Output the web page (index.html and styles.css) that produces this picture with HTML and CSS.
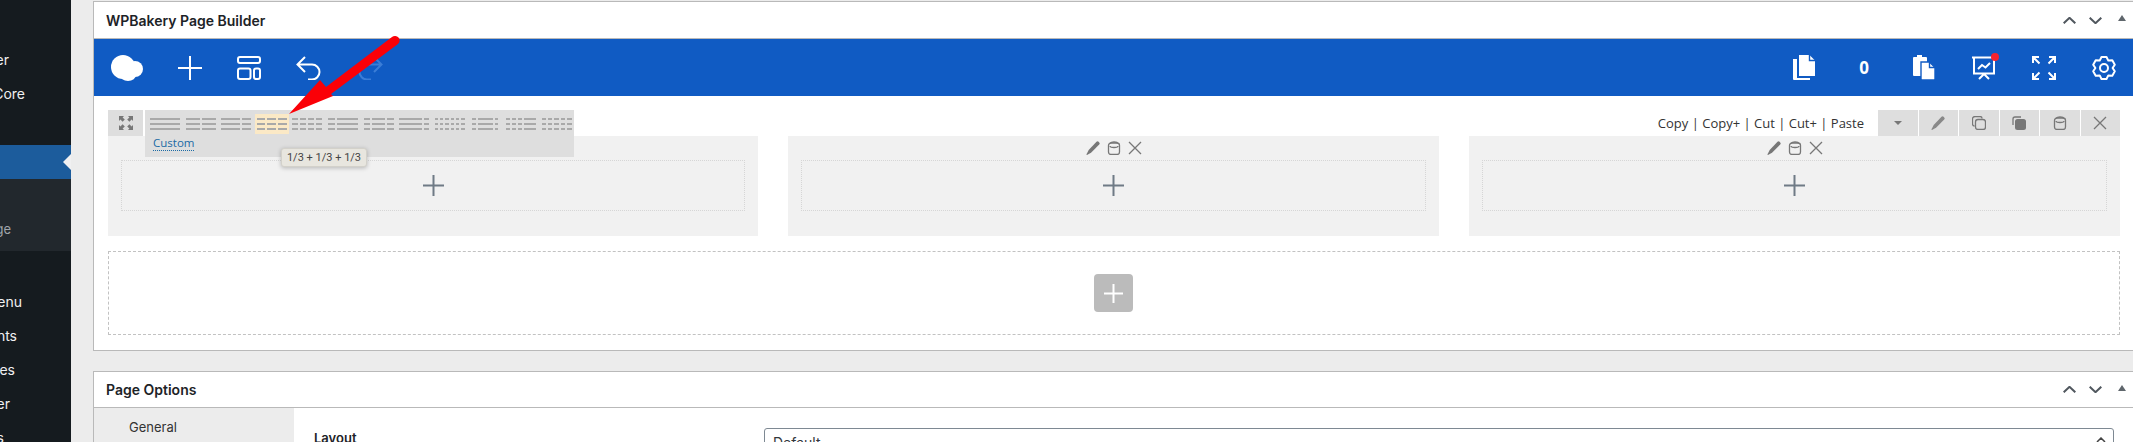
FILE: index.html
```html
<!DOCTYPE html>
<html lang="en">
<head>
<meta charset="utf-8">
<title>WPBakery Page Builder</title>
<link rel="stylesheet" href="styles.css">
</head>
<body>
<aside class="sidebar">
  <div class="side-item side-first">er</div>
  <div class="side-item side-core">Core</div>
  <div class="side-item side-active"></div>
  <div class="side-sub"><span class="side-sub-text">ge</span></div>
  <div class="side-item side-gap"></div>
  <div class="side-item">enu</div>
  <div class="side-item">nts</div>
  <div class="side-item">es</div>
  <div class="side-item">er</div>
  <div class="side-item">s</div>
</aside>
<main class="main">
  <section class="panel">
    <header class="panel-head">
      <h2 class="panel-title">WPBakery Page Builder</h2>
      <div class="panel-tools">
        <svg class="chev" viewBox="0 0 13 7"><path d="M.7 6.300 6.500.8l5.800 5.500"/></svg>
        <svg class="chev" viewBox="0 0 13 7"><path d="M.7.700 6.500 6.200 12.300.7"/></svg>
        <svg class="tri" viewBox="0 0 8 6"><path d="M4 0 8 6H0Z"/></svg>
      </div>
    </header>
    <div class="bluebar">
      <div class="bar-left">
        <svg class="ic-cloud" viewBox="0 0 32 26"><circle cx="12" cy="12" r="12"/><circle cx="24" cy="14" r="8"/><ellipse cx="17" cy="20" rx="8" ry="6"/></svg>
        <svg class="ic-24" viewBox="0 0 24 24"><path class="st" d="M12 0v24M0 12h24"/></svg>
        <svg class="ic-24" viewBox="0 0 24 24"><g class="st"><rect x="1" y="1" width="22" height="6" rx="2"/><rect x="1" y="12.500" width="12.500" height="10.500" rx="2"/><rect x="17" y="12.500" width="6" height="10.500" rx="2"/></g></svg>
        <svg class="ic-undo" viewBox="0 0 25 24"><path class="st" d="M9 1 1.500 8.500 9 16M1.500 8.500H16a7.500 7.500 0 0 1 0 15h-4"/></svg>
        <svg class="ic-redo" viewBox="0 0 27 24"><path class="st-dim" d="M18 1l7.500 7.500L18 16M25.500 8.500H11a7.500 7.500 0 0 0 0 15h4"/></svg>
      </div>
      <div class="bar-right">
        <div class="bar-cell"><svg class="ic-doc" viewBox="0 0 22 25"><path d="M6 0h10.500L22 5.500V21H6ZM0 4h4v19h13v2H1a1 1 0 0 1-1-1Z"/><path class="fold" d="M16.500 0v5.500H22"/></svg></div>
        <div class="bar-cell bar-count">0</div>
        <div class="bar-cell"><svg class="ic-doc" viewBox="0 0 22 25"><path d="M1 2h3V0h5v2h4a1 1 0 0 1 1 1v18H1a1 1 0 0 1-1-1V3a1 1 0 0 1 1-1Z"/><path class="doc-front" d="M8 7h8.500L22 12.500V24a1 1 0 0 1-1 1H9a1 1 0 0 1-1-1Z"/><path class="fold" d="M16.500 7v5.500H22"/></svg></div>
        <div class="bar-cell bar-monitor">
          <svg class="ic-24" viewBox="0 0 24 24"><path class="st" d="M0 1.500h24M2 2v15.500h20V2M12 18l-5 5M12 18l5 5M6 13l4-4 3.500 2.500L18 7"/></svg>
          <span class="dot"></span>
        </div>
        <div class="bar-cell"><svg class="ic-24" viewBox="0 0 24 24"><path class="st" d="M1 7V1h6M1 1l6.500 6.500M23 7V1h-6M23 1l-6.500 6.500M1 17v6h6M1 23l6.500-6.500M23 17v6h-6M23 23l-6.500-6.500"/></svg></div>
        <div class="bar-cell"><svg class="ic-24" viewBox="0 0 24 24"><g class="st"><path class="rj" d="M9.500 1h5l1.800 3.600 4-.3 2.500 4.400-2.200 3.300 2.200 3.300-2.500 4.400-4-.3-1.800 3.600h-5l-1.800-3.600-4 .3-2.500-4.400L3.400 12 1.200 8.700l2.500-4.400 4 .3Z"/><circle cx="12" cy="12" r="4"/></g></svg></div>
      </div>
    </div>
    <div class="builder">
      <div class="row-head">
        <button class="expand" type="button">
          <svg class="ic-ctl" viewBox="0 0 14 14"><path class="ctl-fill" d="M0 0h5L3.600 1.400 5.800 3.600 3.600 5.800 1.400 3.600 0 5ZM14 0v5l-1.400-1.400-2.200 2.200-2.200-2.200 2.200-2.200L9 0ZM0 14V9l1.400 1.400 2.200-2.200 2.200 2.200-2.200 2.200L5 14ZM14 14H9l1.400-1.400-2.200-2.200 2.200-2.200 2.200 2.200L14 9Z"/></svg>
        </button>
        <div class="layouts">
          <div class="lay-row">
            <div class="lay"><div class="lay-bars"><i class="g1"></i></div></div>
            <div class="lay"><div class="lay-bars"><i class="g1"></i><i class="g1"></i></div></div>
            <div class="lay"><div class="lay-bars"><i class="g2"></i><i class="g1"></i></div></div>
            <div class="lay lay-on"><div class="lay-bars"><i class="g1"></i><i class="g1"></i><i class="g1"></i></div></div>
            <div class="lay"><div class="lay-bars"><i class="g1"></i><i class="g1"></i><i class="g1"></i><i class="g1"></i></div></div>
            <div class="lay"><div class="lay-bars"><i class="g1"></i><i class="g3"></i></div></div>
            <div class="lay"><div class="lay-bars"><i class="g1"></i><i class="g2"></i><i class="g1"></i></div></div>
            <div class="lay"><div class="lay-bars"><i class="g5"></i><i class="g1"></i></div></div>
            <div class="lay"><div class="lay-bars"><i class="g1"></i><i class="g1"></i><i class="g1"></i><i class="g1"></i><i class="g1"></i><i class="g1"></i></div></div>
            <div class="lay lay-narrow"><div class="lay-bars"><i class="g1"></i><i class="g4"></i><i class="g1"></i></div></div>
            <div class="lay"><div class="lay-bars"><i class="g1"></i><i class="g1"></i><i class="g1"></i><i class="g3"></i></div></div>
            <div class="lay"><div class="lay-bars"><i class="g1"></i><i class="g1"></i><i class="g1"></i><i class="g1"></i><i class="g1"></i></div></div>
          </div>
          <a class="custom" href="#">Custom</a>
          <div class="tooltip">1/3 + 1/3 + 1/3</div>
        </div>
        <div class="copy-links">Copy | Copy+ | Cut | Cut+ | Paste</div>
        <div class="row-btns">
          <button class="row-btn" type="button"><svg class="ic-caret" viewBox="0 0 8 4"><path class="ctl-fill" d="M0 0h8L4 4Z"/></svg></button>
          <button class="row-btn" type="button"><svg class="ic-ctl ic-soft" viewBox="0 0 14 14"><path class="ctl-pen" d="M10.500.8a1.500 1.500 0 0 1 2.100 0l.6.600a1.500 1.500 0 0 1 0 2.100L5 11.700 1 14l-.6-.5L2.700 9Z"/></svg></button>
          <button class="row-btn" type="button"><svg class="ic-ctl" viewBox="0 0 14 14"><g class="ctl-st"><rect x="3.500" y="3.500" width="10" height="10" rx="2.500"/><path d="M2.500 10A2 2 0 0 1 .5 8V3A2.500 2.500 0 0 1 3 .5h5a2 2 0 0 1 2 2"/></g></svg></button>
          <button class="row-btn" type="button"><svg class="ic-ctl" viewBox="0 0 14 14"><rect class="ctl-fill" x="3" y="3" width="11" height="11" rx="2.500"/><path class="ctl-st" d="M1 9V3a2 2 0 0 1 2-2h6"/></svg></button>
          <button class="row-btn" type="button"><svg class="ic-ctl" viewBox="0 0 14 14"><g class="ctl-st"><rect x="1.500" y="2" width="11" height="11.500" rx="2.500"/><path d="M3 5a4 1.500 0 0 0 8 0M3.500 2.500a3.500 1.500 0 0 1 7 0"/></g></svg></button>
          <button class="row-btn" type="button"><svg class="ic-ctl" viewBox="0 0 14 14"><path class="ctl-st" d="m1 1 12 12M13 1 1 13"/></svg></button>
        </div>
      </div>
      <div class="columns">
        <div class="column">
          <div class="col-tools"></div>
          <div class="col-drop"><svg class="ic-plus" viewBox="0 0 21 21"><path d="M10.500 0v21M0 10.500h21"/></svg></div>
        </div>
        <div class="column">
          <div class="col-tools">
            <svg class="ic-ctl" viewBox="0 0 14 14"><path class="ctl-pen" d="M10.500.8a1.500 1.500 0 0 1 2.100 0l.6.600a1.500 1.500 0 0 1 0 2.100L5 11.700 1 14l-.6-.5L2.700 9Z"/></svg>
            <svg class="ic-ctl" viewBox="0 0 14 14"><g class="ctl-st"><rect x="1.500" y="2" width="11" height="11.500" rx="2.500"/><path d="M3 5a4 1.500 0 0 0 8 0M3.500 2.500a3.500 1.500 0 0 1 7 0"/></g></svg>
            <svg class="ic-ctl" viewBox="0 0 14 14"><path class="ctl-st" d="m1 1 12 12M13 1 1 13"/></svg>
          </div>
          <div class="col-drop"><svg class="ic-plus" viewBox="0 0 21 21"><path d="M10.500 0v21M0 10.500h21"/></svg></div>
        </div>
        <div class="column">
          <div class="col-tools">
            <svg class="ic-ctl" viewBox="0 0 14 14"><path class="ctl-pen" d="M10.500.8a1.500 1.500 0 0 1 2.100 0l.6.600a1.500 1.500 0 0 1 0 2.100L5 11.700 1 14l-.6-.5L2.700 9Z"/></svg>
            <svg class="ic-ctl" viewBox="0 0 14 14"><g class="ctl-st"><rect x="1.500" y="2" width="11" height="11.500" rx="2.500"/><path d="M3 5a4 1.500 0 0 0 8 0M3.500 2.500a3.500 1.500 0 0 1 7 0"/></g></svg>
            <svg class="ic-ctl" viewBox="0 0 14 14"><path class="ctl-st" d="m1 1 12 12M13 1 1 13"/></svg>
          </div>
          <div class="col-drop"><svg class="ic-plus" viewBox="0 0 21 21"><path d="M10.500 0v21M0 10.500h21"/></svg></div>
        </div>
      </div>
      <div class="add-row">
        <button class="add-btn" type="button"><svg class="ic-add" viewBox="0 0 19 19"><path d="M9.500 0v19M0 9.500h19"/></svg></button>
      </div>
    </div>
  </section>
  <section class="panel panel-options">
    <header class="panel-head panel-head-options">
      <h2 class="panel-title">Page Options</h2>
      <div class="panel-tools">
        <svg class="chev" viewBox="0 0 13 7"><path d="M.7 6.300 6.500.8l5.800 5.500"/></svg>
        <svg class="chev" viewBox="0 0 13 7"><path d="M.7.700 6.500 6.200 12.300.7"/></svg>
        <svg class="tri" viewBox="0 0 8 6"><path d="M4 0 8 6H0Z"/></svg>
      </div>
    </header>
    <div class="options">
      <nav class="opt-nav"><div class="opt-tab">General</div></nav>
      <div class="opt-body">
        <div class="opt-label">Layout</div>
        <div class="opt-select">Default
          <svg class="ic-updown" viewBox="0 0 10 14"><path d="M1 5l4-4 4 4M1 9l4 4 4-4"/></svg>
        </div>
      </div>
    </div>
  </section>
</main>
<svg class="annot" viewBox="0 0 2133 442">
  <path class="annot-red" d="M289 114 320 80l6 7 66-50a4.500 4.500 0 0 1 6 7l-67 50 2 2Z"/>
</svg>
</body>
</html>
```

FILE: styles.css
```css
* { box-sizing: border-box; }
html { height: 442px; overflow: hidden; }
body {
  margin: 0;
  height: 442px;
  display: flex;
  overflow: hidden;
  background: #ececec;
  font-family: Inter, "Liberation Sans", sans-serif;
  color: #1d2327;
}
svg { display: block; flex: none; }

/* sidebar */
.sidebar {
  width: 71px;
  flex: none;
  height: 442px;
  overflow: hidden;
  padding-top: 42px;
  background: #151b1f;
  color: #f0f0f1;
  font-size: 14px;
}
.side-item {
  height: 34px;
  display: flex;
  align-items: center;
  justify-content: flex-end;
  padding-right: 62px;
  white-space: nowrap;
}
.side-core { padding-right: 46px; margin-bottom: 35px; }
.side-first { padding-right: 62px; }
.side-active { position: relative; background: #1c5c9c; }
.side-active::after {
  content: "";
  position: absolute;
  right: 0;
  top: 9px;
  border: 8px solid transparent;
  border-right-color: #f0f0f1;
}
.side-sub {
  height: 72px;
  background: #22282d;
  display: flex;
  justify-content: flex-end;
  padding: 41px 60px 0 0;
  font-size: 13px;
  color: #a0a5aa;
}
.side-sub-text { line-height: 18px; }
.side-gap { height: 33px; }
.side-item:nth-child(6) { padding-right: 49px; }
.side-item:nth-child(7) { padding-right: 54px; }
.side-item:nth-child(8) { padding-right: 56px; }
.side-item:nth-child(9) { padding-right: 61px; }
.side-item:nth-child(10) { padding-right: 67px; }

/* panels */
.main {
  flex: 1;
  min-width: 0;
  padding: 1px 0 0 22px;
  font-size: 13px;
}
.panel {
  background: #fff;
  border: 1px solid #b9b9b9;
  border-right: 0;
}
.panel-options { margin-top: 20px; }
.panel-head {
  height: 36px;
  display: flex;
  align-items: center;
  justify-content: space-between;
  padding: 0 7px 0 12px;
}
.panel-head-options { height: 36px; border-bottom: 1px solid #b9b9b9; }
.panel-title {
  margin: 0;
  font-size: 14px;
  font-weight: 600;
  color: #1d2327;
}
.panel-tools { display: flex; align-items: center; gap: 13px; }
.chev { width: 13px; height: 7px; }
.chev path { fill: none; stroke: #50575e; stroke-width: 2; }
.tri { width: 8px; height: 6px; margin: -4px 0 0 3px; }
.tri path { fill: #5f666c; }

/* blue toolbar */
.bluebar {
  height: 58px;
  background: #105bc3;
  border-top: 1px solid #b9b9b9;
  display: flex;
  align-items: center;
  justify-content: space-between;
  padding: 0 0 0 17px;
}
.bar-left { display: flex; align-items: center; gap: 35px; }
.bar-right { display: flex; align-items: center; margin-right: -1px; }
.bar-cell {
  position: relative;
  width: 60px;
  height: 26px;
  display: flex;
  align-items: center;
  justify-content: center;
}
.bar-count { color: #fff; font: 700 17px "Open Sans", sans-serif; }
.ic-cloud { width: 32px; height: 26px; fill: #fff; }
.ic-24 { width: 24px; height: 24px; }
.ic-undo { width: 25px; height: 24px; }
.ic-redo { width: 27px; height: 24px; }
.ic-doc { width: 22px; height: 25px; fill: #fff; }
.fold { fill: none; stroke: #105bc3; stroke-width: 1.4; }
.doc-front { stroke: #105bc3; stroke-width: 1.4; }
.st { fill: none; stroke: #fff; stroke-width: 2; }
.st path, .st rect, .st circle { fill: none; }
.rj { stroke-linejoin: round; }
.st-dim { fill: none; stroke: #3b7dd6; stroke-width: 2; }
.dot {
  position: absolute;
  left: 37px;
  top: -2px;
  width: 8px;
  height: 8px;
  border-radius: 50%;
  background: #f5222d;
}

/* builder */
.builder { padding: 14px 13px 15px 14px; }
.row-head {
  position: relative;
  height: 26px;
  display: flex;
  align-items: center;
}
.expand {
  width: 35px;
  height: 26px;
  padding: 0;
  border: 0;
  background: #dedede;
  display: flex;
  align-items: center;
  justify-content: center;
}
.ic-ctl { width: 14px; height: 14px; }
.ic-soft .ctl-pen { fill: #888; }
.ic-caret { width: 8px; height: 4px; }
.ctl-fill { fill: #777; }
.ctl-pen { fill: #777; }
.ctl-st { fill: none; stroke: #777; stroke-width: 1.3; }

.layouts {
  position: absolute;
  left: 37px;
  top: 0;
  width: 429px;
  height: 47px;
  background: #dedede;
  z-index: 2;
}
.lay-row { display: flex; gap: 1.6px; padding: 0 0 0 3px; }
.lay { width: 34px; height: 24px; flex: none; padding: 8px 2px 4px; }
.lay-on { padding-top: 4px; height: 20px; margin-top: 4px; background: #fbe9c6; }
.lay-narrow { padding-left: 4px; padding-right: 4px; }
.lay-bars { display: flex; gap: 2px; height: 12px; }
.lay-bars i {
  display: block;
  background: repeating-linear-gradient(#a9a9a9 0 2px, transparent 2px 5px);
}
.g1 { flex: 1; }
.g2 { flex: 2; }
.g3 { flex: 3; }
.g4 { flex: 4; }
.g5 { flex: 5; }
.custom {
  display: inline-block;
  margin: 1px 0 0 8px;
  font: 11.5px/15px "Open Sans", sans-serif;
  color: #1a6aa5;
  text-decoration: none;
  border-bottom: 1px dotted #1a6aa5;
}
.tooltip {
  position: absolute;
  left: 136px;
  top: 38px;
  width: 86px;
  height: 19px;
  background: #e8e6df;
  border: 1px solid #d3d1ca;
  border-radius: 3px;
  box-shadow: 0 1px 4px rgba(0, 0, 0, .25);
  font: 11px/17px Roboto, sans-serif;
  color: #444;
  text-align: center;
}
.copy-links {
  margin-left: auto;
  margin-right: 14px;
  font: 13px "Open Sans", sans-serif;
  color: #333;
  white-space: nowrap;
}
.row-btns { display: flex; gap: 1px; }
.row-btn {
  width: 39.5px;
  height: 26px;
  padding: 0;
  border: 0;
  background: #dedede;
  display: flex;
  align-items: center;
  justify-content: center;
}
.columns {
  display: grid;
  grid-template-columns: 650fr 651fr 651fr;
  gap: 30px;
  height: 100px;
}
.column { background: #f1f1f1; padding: 0 13px; }
.col-tools {
  height: 24px;
  display: flex;
  align-items: center;
  justify-content: center;
  gap: 7px;
}
.col-drop {
  height: 51px;
  border: 1px dotted #d6d6d6;
  display: flex;
  align-items: center;
  justify-content: center;
}
.ic-plus { width: 21px; height: 21px; }
.ic-plus path { fill: none; stroke: #6f7a85; stroke-width: 2; }
.add-row {
  margin-top: 15px;
  height: 84px;
  border: 1px dashed #c2c2c2;
  display: flex;
  align-items: center;
  justify-content: center;
}
.add-btn {
  width: 39px;
  height: 38px;
  margin-left: -1px;
  padding: 0;
  border: 0;
  border-radius: 4px;
  background: #bbb;
  display: flex;
  align-items: center;
  justify-content: center;
}
.ic-add { width: 19px; height: 19px; }
.ic-add path { fill: none; stroke: #fff; stroke-width: 2; }

/* options */
.options { display: flex; height: 60px; }
.opt-nav { width: 200px; flex: none; background: #ececec; }
.opt-tab { padding: 10px 0 0 35px; font-size: 13px; line-height: 18px; color: #333; }
.opt-body { flex: 1; display: flex; padding: 20px 19px 0 20px; }
.opt-label { width: 450px; font-size: 13px; font-weight: 600; line-height: 20px; color: #1d2327; }
.opt-select {
  position: relative;
  flex: 1;
  height: 40px;
  border: 1px solid #7e8993;
  border-radius: 3px;
  padding: 5px 8px;
  font-size: 14px;
  color: #32373c;
}
.ic-updown { position: absolute; right: 7px; top: 8px; width: 10px; height: 14px; }
.ic-updown path { fill: none; stroke: #444; stroke-width: 1.5; }

/* red annotation arrow over the screenshot */
.annot {
  position: absolute;
  left: 0;
  top: 0;
  width: 2133px;
  height: 442px;
  pointer-events: none;
  z-index: 5;
}
.annot-red { fill: #fb0007; }
```
